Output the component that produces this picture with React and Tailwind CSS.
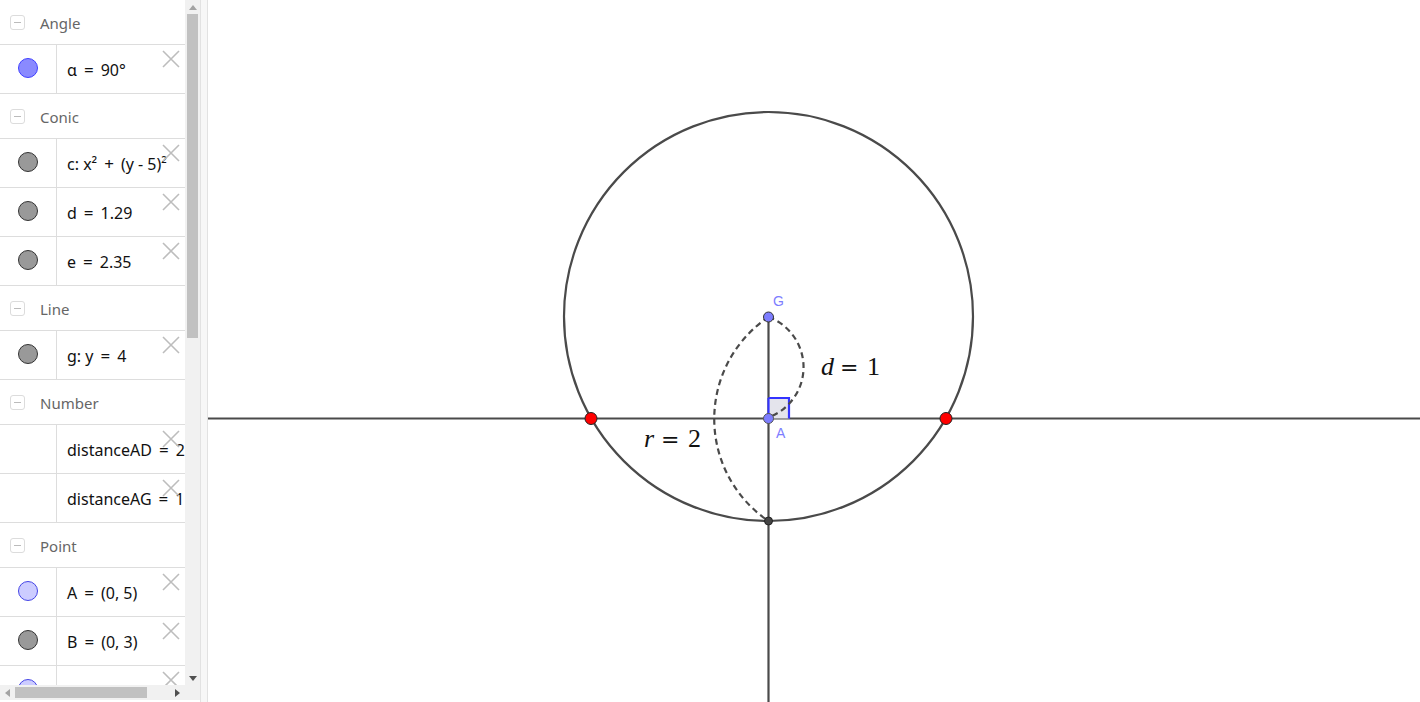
import React from 'react';

const groups = [
  {
    name: 'Angle',
    items: [{ text: 'α = 90°', dot: 'angle' }],
  },
  {
    name: 'Conic',
    items: [
      { text: 'c: x² + (y - 5)²', dot: 'gray' },
      { text: 'd = 1.29', dot: 'gray' },
      { text: 'e = 2.35', dot: 'gray' },
    ],
  },
  {
    name: 'Line',
    items: [{ text: 'g: y = 4', dot: 'gray' }],
  },
  {
    name: 'Number',
    items: [
      { text: 'distanceAD = 2', dot: null },
      { text: 'distanceAG = 1', dot: null },
    ],
  },
  {
    name: 'Point',
    items: [
      { text: 'A = (0, 5)', dot: 'point' },
      { text: 'B = (0, 3)', dot: 'gray' },
      { text: 'D = (0, 7)', dot: 'point' },
    ],
  },
];

const Dot = ({ kind }) => {
  if (!kind) return null;
  if (kind === 'angle') {
    return <div className="w-[20px] h-[20px] rounded-full bg-[#8a8aff] border border-[#4040ff]" />;
  }
  if (kind === 'point') {
    return <div className="w-[20px] h-[20px] rounded-full bg-[#ccccff] border border-[#4545e6]" />;
  }
  return <div className="w-[20px] h-[20px] rounded-full bg-[#999999] border border-[#333333]" />;
};

const CloseIcon = () => (
  <svg className="absolute left-[162px] top-[5px]" width="18" height="18" viewBox="0 0 18 18">
    <path d="M1 1 L17 17 M17 1 L1 17" stroke="#bdbdbd" strokeWidth="1.6" fill="none" />
  </svg>
);

// math-style spacing around = and +
const Formula = ({ text }) => {
  const parts = text.split(/ ([=+]) /);
  return (
    <>
      {parts.map((p, i) =>
        p === '=' || p === '+' ? (
          <span key={i} className="px-[7px] text-[17px]">{p}</span>
        ) : (
          <span key={i}>{p}</span>
        )
      )}
    </>
  );
};

const Header = ({ name }) => (
  <div className="h-[45px] flex items-center border-b border-[#dddddd] shrink-0">
    <div className="ml-[10px] w-[15px] h-[15px] rounded-[3px] border border-[#dcdcdc] flex items-center justify-center">
      <div className="w-[7px] h-[1px] bg-[#bbbbbb]" />
    </div>
    <span className="ml-[15px] pt-[2px] text-[15px] text-[#666666]">{name}</span>
  </div>
);

const Row = ({ item }) => (
  <div className="relative h-[49px] flex border-b border-[#dddddd] shrink-0">
    <div className="w-[57px] border-r border-[#dddddd] flex items-center justify-center pb-[3px]">
      <Dot kind={item.dot} />
    </div>
    <div className="flex-1 flex items-center pl-[10px] pt-[2px] whitespace-nowrap text-[16px] text-[#111111]">
      <Formula text={item.text} />
    </div>
    <CloseIcon />
  </div>
);

const Sidebar = () => (
  <div className="w-[200px] h-full flex flex-col bg-white">
    <div className="flex flex-1 min-h-0">
      {/* Algebra list */}
      <div className="w-[185px] overflow-hidden flex flex-col">
        {groups.map((g) => (
          <React.Fragment key={g.name}>
            <Header name={g.name} />
            {g.items.map((item) => (
              <Row key={item.text} item={item} />
            ))}
          </React.Fragment>
        ))}
      </div>
      {/* Vertical scrollbar */}
      <div className="w-[15px] bg-[#f1f1f1] flex flex-col items-center">
        <div className="h-[14px] flex items-center justify-center">
          <div className="w-0 h-0 border-l-[4px] border-r-[4px] border-b-[5px] border-l-transparent border-r-transparent border-b-[#a3a3a3]" />
        </div>
        <div className="w-[11px] h-[324px] bg-[#c1c1c1]" />
        <div className="flex-1" />
        <div className="h-[14px] flex items-center justify-center">
          <div className="w-0 h-0 border-l-[4px] border-r-[4px] border-t-[5px] border-l-transparent border-r-transparent border-t-[#505050]" />
        </div>
      </div>
    </div>
    {/* Horizontal scrollbar */}
    <div className="h-[17px] flex bg-white">
      <div className="w-[185px] h-[15px] bg-[#f1f1f1] flex items-center">
        <div className="w-[15px] flex items-center justify-center">
          <div className="w-0 h-0 border-t-[4px] border-b-[4px] border-r-[5px] border-t-transparent border-b-transparent border-r-[#a3a3a3]" />
        </div>
        <div className="w-[132px] h-[11px] bg-[#c1c1c1]" />
        <div className="flex-1" />
        <div className="w-[15px] flex items-center justify-center">
          <div className="w-0 h-0 border-t-[4px] border-b-[4px] border-l-[5px] border-t-transparent border-b-transparent border-l-[#505050]" />
        </div>
      </div>
      <div className="w-[15px] h-[15px] bg-[#f1f1f1]" />
    </div>
  </div>
);

const serif = "'Liberation Serif', 'DejaVu Serif', serif";
const eqFont = "'DejaVu Serif', serif";

const Graphics = () => (
  <div className="flex-1 h-full bg-white overflow-hidden">
    <svg width="1212" height="702" viewBox="208 0 1212 702">
      <line x1="200" y1="418.5" x2="1420" y2="418.5" stroke="#4a4a4a" strokeWidth="2.2" />
      <line x1="768.5" y1="317" x2="768.5" y2="702" stroke="#4a4a4a" strokeWidth="2.2" />
      <circle cx="768.5" cy="316.5" r="204.5" fill="none" stroke="#4a4a4a" strokeWidth="2.2" />

      {/* right angle marker */}
      <rect x="768.5" y="398" width="21" height="20.5" fill="#e4e4ec" />
      <path d="M768.5 398 L789 398 L789 418.5" fill="none" stroke="#3333ff" strokeWidth="2.2" />
      <path d="M768.5 398 L768.5 418.5" fill="none" stroke="#3333ff" strokeWidth="2.2" />

      {/* dashed arcs */}
      <path d="M768.5 317 A123 123 0 0 0 768.5 521" fill="none" stroke="#4a4a4a" strokeWidth="2.2" strokeDasharray="6 4" />
      <path d="M768.5 317 A53.5 53.5 0 0 1 772 416" fill="none" stroke="#4a4a4a" strokeWidth="2.2" strokeDasharray="6 4" />

      {/* points */}
      <circle cx="591" cy="418.5" r="6" fill="#ff0000" stroke="#222222" strokeWidth="1" />
      <circle cx="946" cy="418.5" r="6" fill="#ff0000" stroke="#222222" strokeWidth="1" />
      <circle cx="768.5" cy="317" r="5" fill="#7d7dff" stroke="#333333" strokeWidth="1" />
      <circle cx="768.5" cy="418.5" r="5" fill="#7d7dff" stroke="#555555" strokeWidth="1" />
      <circle cx="768.5" cy="521" r="4" fill="#444444" stroke="#222222" strokeWidth="1" />

      {/* labels */}
      <text x="773" y="306" fill="#7d7dff" fontSize="14" fontFamily="'Liberation Sans', Arial, sans-serif">G</text>
      <text x="776" y="438" fill="#7d7dff" fontSize="14" fontFamily="'Liberation Sans', Arial, sans-serif">A</text>

      <text x="821" y="375" fill="#111111" fontSize="26" fontStyle="italic" fontFamily={serif}>d</text>
      <text x="840" y="375" fill="#111111" fontSize="22" fontFamily={eqFont}>=</text>
      <text x="867" y="375" fill="#111111" fontSize="26" fontFamily={serif}>1</text>

      <text x="644" y="447" fill="#111111" fontSize="26" fontStyle="italic" fontFamily={serif}>r</text>
      <text x="661" y="447" fill="#111111" fontSize="22" fontFamily={eqFont}>=</text>
      <text x="688" y="447" fill="#111111" fontSize="26" fontFamily={serif}>2</text>
    </svg>
  </div>
);

export default function App() {
  return (
    <div
      className="w-[1420px] h-[702px] flex overflow-hidden bg-white"
      style={{ fontFamily: "'Noto Sans', 'Open Sans', sans-serif" }}
    >
      <Sidebar />
      {/* splitter */}
      <div className="w-[8px] h-full bg-[#f7f7f7] border-l border-r border-[#e2e2e2]" />
      <Graphics />
    </div>
  );
}
